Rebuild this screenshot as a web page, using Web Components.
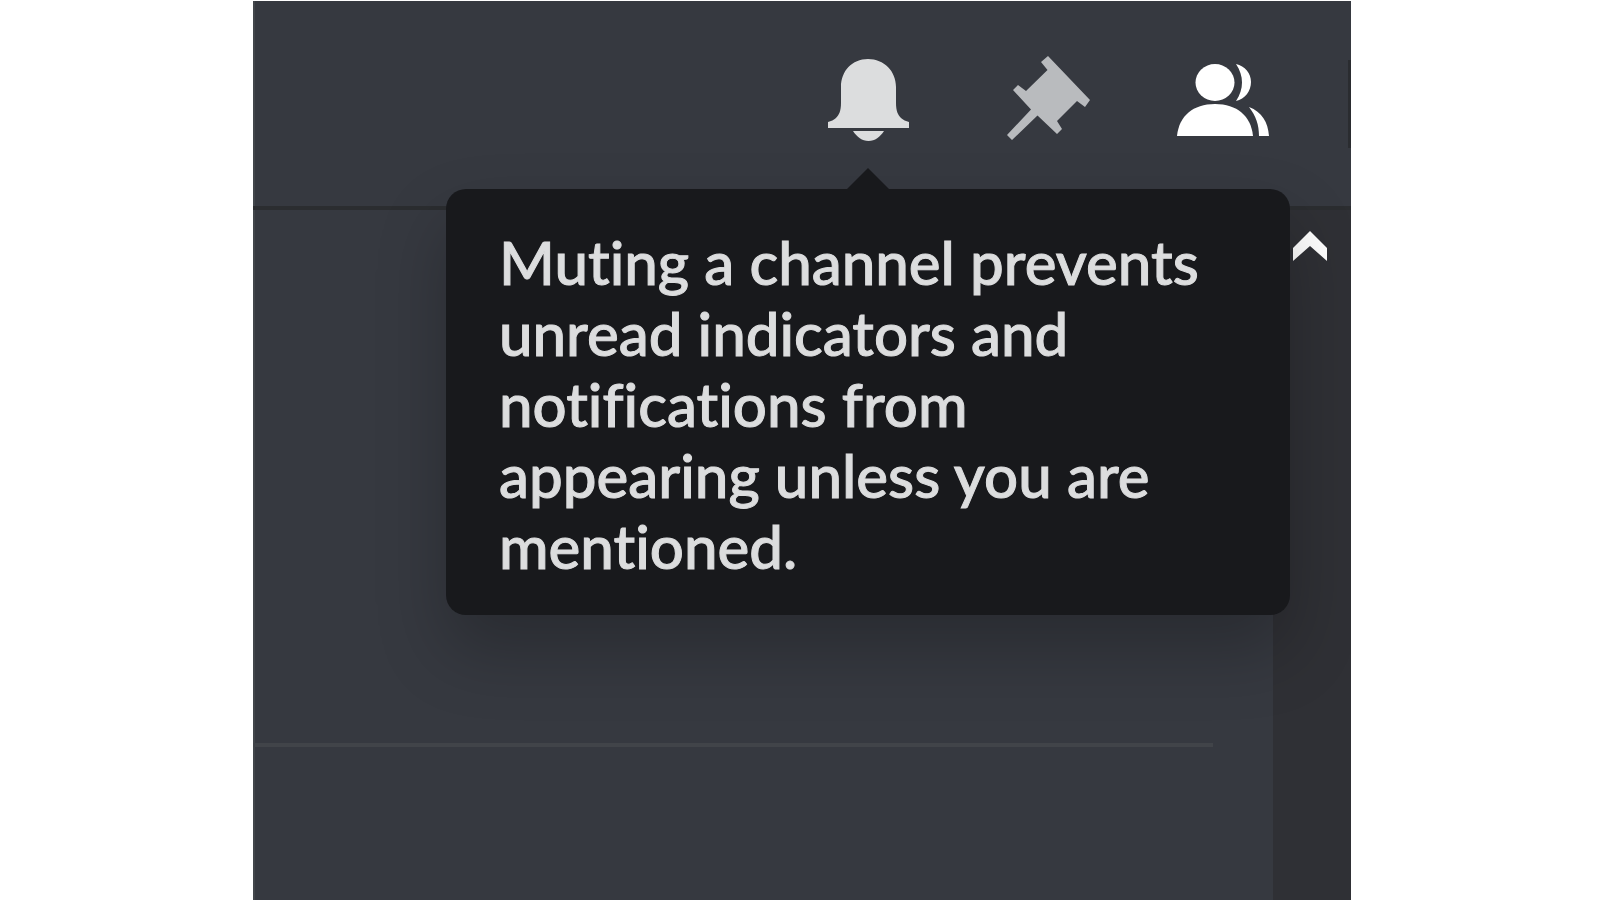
<!DOCTYPE html>
<html lang="en">
<head>
<meta charset="utf-8">
<meta name="viewport" content="width=device-width, initial-scale=1">
<title>Channel notifications</title>
<style>
body { margin: 0; background: #fff; font-family: Lato, "Open Sans", sans-serif; }
</style>
</head>
<body>
<chat-window>
  <channel-toolbar slot="header">
    <icon-button label="Mute channel" icon="bell" tone="normal">
      <tool-tip slot="tip">Muting a channel prevents unread indicators and notifications from appearing unless you are mentioned.</tool-tip>
    </icon-button>
    <icon-button label="Pinned messages" icon="pin" tone="dim"></icon-button>
    <icon-button label="Member list" icon="people" tone="active"></icon-button>
  </channel-toolbar>
  <message-pane slot="main"></message-pane>
  <member-rail slot="side"></member-rail>
</chat-window>
<script>
const define = (name, html, setup) => customElements.define(name, class extends HTMLElement {
  connectedCallback() {
    if (this.shadowRoot) return;
    const template = document.createElement('template');
    template.innerHTML = html;
    this.attachShadow({ mode: 'open' }).append(template.content.cloneNode(true));
    if (setup) setup(this, this.shadowRoot);
  }
});

define('chat-window', `
<style>
  :host { display: grid; grid-template-columns: 253fr 1098fr 249fr; min-height: 100vh; box-sizing: border-box; padding-top: 1px; overflow: hidden; }
  .frame { grid-column: 2; display: flex; flex-direction: column; background: #363940; overflow: hidden; box-shadow: inset 2px 0 #42464b; }
  .body { flex: 1; display: grid; grid-template-columns: 1fr 78px; }
</style>
<div class="frame">
  <slot name="header"></slot>
  <div class="body"><slot name="main"></slot><slot name="side"></slot></div>
</div>`);

define('channel-toolbar', `
<style>
  :host { display: flex; justify-content: flex-end; align-items: center; gap: 70px; height: 205px; border-bottom: 4px solid #2b2d30; position: relative; z-index: 1; }
  .search { width: 3px; height: 88px; background: #2a2c30; }
</style>
<slot></slot><div class="search"></div>`);

const icons = {
  bell: '<path d="M54 9C38 9 27 21 27 37V53C27 61 25 65 22 68C20 70 17 71 14 72V78H95V72C92 71 89 70 87 68C84 65 82 61 82 53V37C82 21 70 9 54 9Z"/><path d="M39 81H70C66 87 61 91 54.500 91S43 87 39 81Z"/>',
  pin: '<path d="M56 6L98 50L93 57L85 51L65 71L70 79L65 84L45.500 65.500L20 90L15 85L39 59.500L21 40L26 35L34 41L55.500 20L49 12Z"/>',
  people: '<ellipse cx="45" cy="32.5" rx="19.5" ry="18.5"/><path d="M7 86C9 66 23 54 45 54S81 66 83 86Z"/><path d="M66 14C75 16 81 23 81 32S75 49 66 51C74 39 74 26 66 14Z"/><path d="M79 57C92 62 98 72 99 86H89C89 75 86 66 79 57Z"/>'
};

define('icon-button', `
<style>
  :host { display: block; position: relative; color: #dcddde; }
  :host([tone="dim"]) { color: #b9bbbe; }
  :host([tone="active"]) { color: #fff; }
  button { display: block; padding: 0; border: 0; background: none; color: inherit; cursor: pointer; }
  svg { display: block; width: 108px; height: 108px; fill: currentColor; }
</style>
<button type="button"><svg viewBox="0 0 108 108" aria-hidden="true"></svg></button>
<slot name="tip"></slot>`, (host, root) => {
  root.querySelector('button').setAttribute('aria-label', host.getAttribute('label'));
  root.querySelector('svg').innerHTML = icons[host.getAttribute('icon')];
});

define('tool-tip', `
<style>
  :host { display: block; position: absolute; top: calc(100% + 31px); left: 50%; transform: translateX(-50%); width: 844px; box-sizing: border-box; padding: 38px 66px 33px 53px; border-radius: 20px; background: #18191c; color: #dcddde; font-size: 60px; line-height: 71px; font-weight: 500; -webkit-text-stroke: 1px #dcddde; font-variant-ligatures: no-common-ligatures; box-shadow: 0 35px 70px rgba(0, 0, 0, .24); }
  .arrow { position: absolute; bottom: 100%; left: 50%; margin-left: -21px; border: 21px solid transparent; border-top: 0; border-bottom-color: #18191c; }
</style>
<div class="arrow"></div><slot></slot>`, host => host.setAttribute('role', 'tooltip'));

define('message-pane', `
<style>
  :host { display: block; padding: 533px 60px 0 0; }
  hr { margin: 0; border: 0; height: 4px; background: #414449; }
</style>
<hr>`);

define('member-rail', `
<style>
  :host { display: flex; justify-content: center; align-items: flex-start; background: #2f3035; padding: 21px 4px 0 0; }
  button { display: block; padding: 0; border: 0; background: none; color: #fff; cursor: pointer; }
  svg { display: block; width: 34px; height: 30px; fill: currentColor; }
</style>
<button type="button" aria-label="Scroll up"><svg viewBox="0 0 34 30" aria-hidden="true"><path d="M17 0L34 17V30L17 15L0 30V17Z"/></svg></button>`);
</script>
</body>
</html>
